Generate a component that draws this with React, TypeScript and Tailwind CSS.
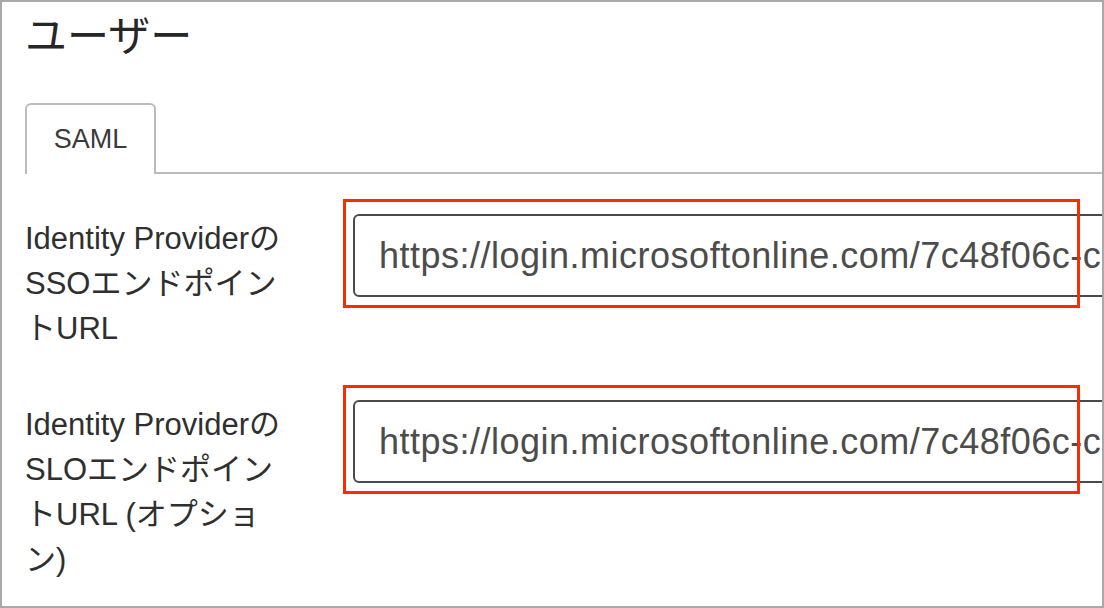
import React from "react";

const font = { fontFamily: '"Liberation Sans", "Noto Sans CJK JP", sans-serif' };

const FieldRow = ({ lines, value }: { lines: string[]; value: string }) => {
  return (
    <div className="flex items-start">
      <div className="w-[328px] shrink-0 pt-[2px] text-[31px] leading-[45px] text-[#2f2f2f]">
        {lines.map((l) => (
          <div key={l} className="whitespace-nowrap">
            {l}
          </div>
        ))}
      </div>
      <div className="relative shrink-0">
        <input
          readOnly
          value={value}
          style={font}
          className="w-[900px] h-[83px] border-2 border-[#4a4a4a] rounded-[6px] pl-[24px] text-[36px] tracking-[0.5px] text-[#4c4c4c] bg-white outline-none"
        />
        {/* annotation box */}
        <div className="absolute left-[-10px] top-[-15px] w-[737px] h-[109px] border-[3px] border-[#ff2b00] pointer-events-none" />
      </div>
    </div>
  );
};

export default function App() {
  const url = "https://login.microsoftonline.com/7c48f06c-c0a1-4d3b-9a8e-2f1b6e5c7d90/saml2";
  return (
    <div
      style={font}
      className="w-[1104px] h-[608px] border-2 border-[#a9a9a9] overflow-hidden bg-white"
    >
      <div className="pl-[23px] pt-[14px] text-[42px] leading-[42px] text-[#262626]">
        ユーザー
      </div>

      <div className="flex mt-[45px] pl-[23px]">
        <div className="w-[131px] h-[71px] border-2 border-b-0 border-[#bcbcbc] rounded-t-[6px] flex items-center justify-center text-[27px] text-[#3a3a3a]">
          SAML
        </div>
        <div className="flex-1 border-b-2 border-[#bcbcbc]" />
      </div>

      <div className="flex flex-col gap-[49px] mt-[40px] pl-[23px]">
        <FieldRow
          lines={["Identity Providerの", "SSOエンドポイン", "トURL"]}
          value={url}
        />
        <FieldRow
          lines={["Identity Providerの", "SLOエンドポイン", "トURL (オプショ", "ン)"]}
          value={url}
        />
      </div>
    </div>
  );
}
